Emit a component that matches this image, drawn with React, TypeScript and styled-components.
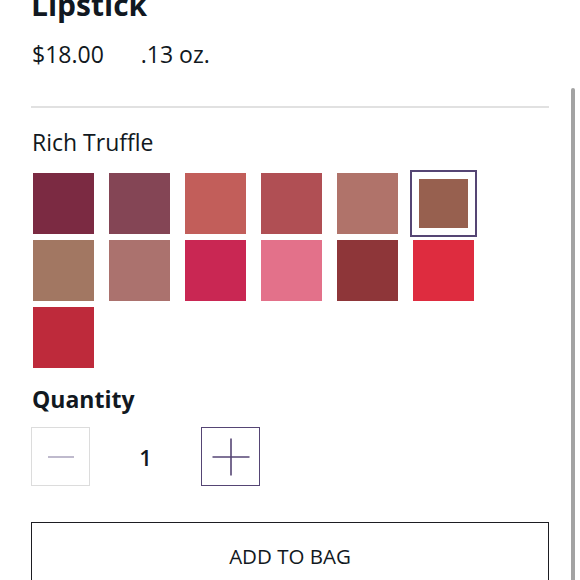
import React, { useState } from 'react';
import styled, { createGlobalStyle } from 'styled-components';

const GlobalStyle = createGlobalStyle`
    html, body {
        margin: 0;
        padding: 0;
        background: #ffffff;
        overflow: hidden;
    }
    body {
        font-family: "Open Sans", "Noto Sans", sans-serif;
        color: #111821;
    }
`

// Product panel
const StyledPage = styled.div`
    width: 580px;
    height: 580px;
    box-sizing: border-box;
    padding: 0 31px;
    overflow: hidden;
`

const Title = styled.h1`
    margin: -13px 0 0;
    font-size: 30px;
    line-height: 36px;
    font-weight: 700;
`

const PriceRow = styled.div`
    display: flex;
    gap: 37px;
    margin-top: 16px;
    font-size: 23px;
    line-height: 30px;
    padding-left: 1px;
`

const Divider = styled.hr`
    margin: 37px 0 0;
    border: none;
    border-top: 2px solid #e1e1e1;
`

const ShadeName = styled.div`
    margin-top: 19px;
    font-size: 23px;
    line-height: 30px;
    padding-left: 1px;
`

const SwatchGrid = styled.div`
    display: grid;
    grid-template-columns: repeat(6, 61px);
    grid-auto-rows: 61px;
    column-gap: 15px;
    row-gap: 6px;
    margin: 16px 0 0 2px;
`

const Swatch = styled.button<{ $color: string; $selected?: boolean }>`
    width: 61px;
    height: 61px;
    padding: 0;
    border: none;
    cursor: pointer;
    background: ${(p) => p.$color};
    box-shadow: ${(p) => (p.$selected ? 'inset 0 0 0 6px #ffffff' : 'none')};
    outline: ${(p) => (p.$selected ? '2.5px solid #554574' : 'none')};
    outline-offset: 1.5px;
`

const SectionLabel = styled.div`
    margin-top: 16px;
    font-size: 23px;
    line-height: 30px;
    font-weight: 700;
    padding-left: 1px;
`

const QtyRow = styled.div`
    display: flex;
    align-items: center;
    margin-top: 13px;
`

const QtyButton = styled.button<{ $active?: boolean }>`
    width: 59px;
    height: 59px;
    padding: 0;
    background: #ffffff;
    display: flex;
    align-items: center;
    justify-content: center;
    border: ${(p) => (p.$active ? '1.5px solid #554574' : '1.5px solid #dcdcdc')};
    cursor: pointer;
`

const QtyValue = styled.div`
    width: 111px;
    text-align: center;
    font-size: 22px;
    font-weight: 600;
`

const AddButton = styled.button`
    display: block;
    width: 100%;
    height: 68px;
    margin-top: 36px;
    background: #ffffff;
    border: 1.5px solid #1d1d22;
    font-family: "Open Sans", "Noto Sans", sans-serif;
    font-size: 20.5px;
    color: #111821;
    cursor: pointer;
`

const ScrollIndicator = styled.div`
    position: fixed;
    top: 88px;
    right: 5px;
    width: 4px;
    bottom: -4px;
    border-radius: 2px;
    background: #a3a3a3;
`

const shades = [
    '#7b2a42', '#844555', '#c25e5a', '#b04f54', '#b0736a', '#97604f',
    '#a27762', '#ab726e', '#c92753', '#e3718a', '#8e3639', '#de2c3f',
    '#be2a3b',
]

export default function App() {
    const [selected, setSelected] = useState(5);
    const [qty, setQty] = useState(1);

    return (
        <>
            <GlobalStyle />
            <StyledPage>
                <Title>Lipstick</Title>
                <PriceRow>
                    <span>$18.00</span>
                    <span>.13 oz.</span>
                </PriceRow>
                <Divider />
                <ShadeName>Rich Truffle</ShadeName>
                <SwatchGrid>
                    {shades.map((c, i) => (
                        <Swatch
                            key={c}
                            $color={c}
                            $selected={i === selected}
                            onClick={() => setSelected(i)}
                            aria-label={`shade ${i + 1}`}
                        />
                    ))}
                </SwatchGrid>
                <SectionLabel>Quantity</SectionLabel>
                <QtyRow>
                    <QtyButton onClick={() => setQty(Math.max(1, qty - 1))} aria-label="decrease">
                        <svg width="28" height="4" viewBox="0 0 28 4">
                            <line x1="1" y1="2" x2="27" y2="2" stroke="#aaa3bd" strokeWidth="1.5" />
                        </svg>
                    </QtyButton>
                    <QtyValue>{qty}</QtyValue>
                    <QtyButton $active onClick={() => setQty(qty + 1)} aria-label="increase">
                        <svg width="38" height="38" viewBox="0 0 38 38">
                            <line x1="0.5" y1="19" x2="37.5" y2="19" stroke="#554574" strokeWidth="1.6" />
                            <line x1="19" y1="0.5" x2="19" y2="37.5" stroke="#554574" strokeWidth="1.6" />
                        </svg>
                    </QtyButton>
                </QtyRow>
                <AddButton>ADD TO BAG</AddButton>
            </StyledPage>
            <ScrollIndicator />
        </>
    );
}
